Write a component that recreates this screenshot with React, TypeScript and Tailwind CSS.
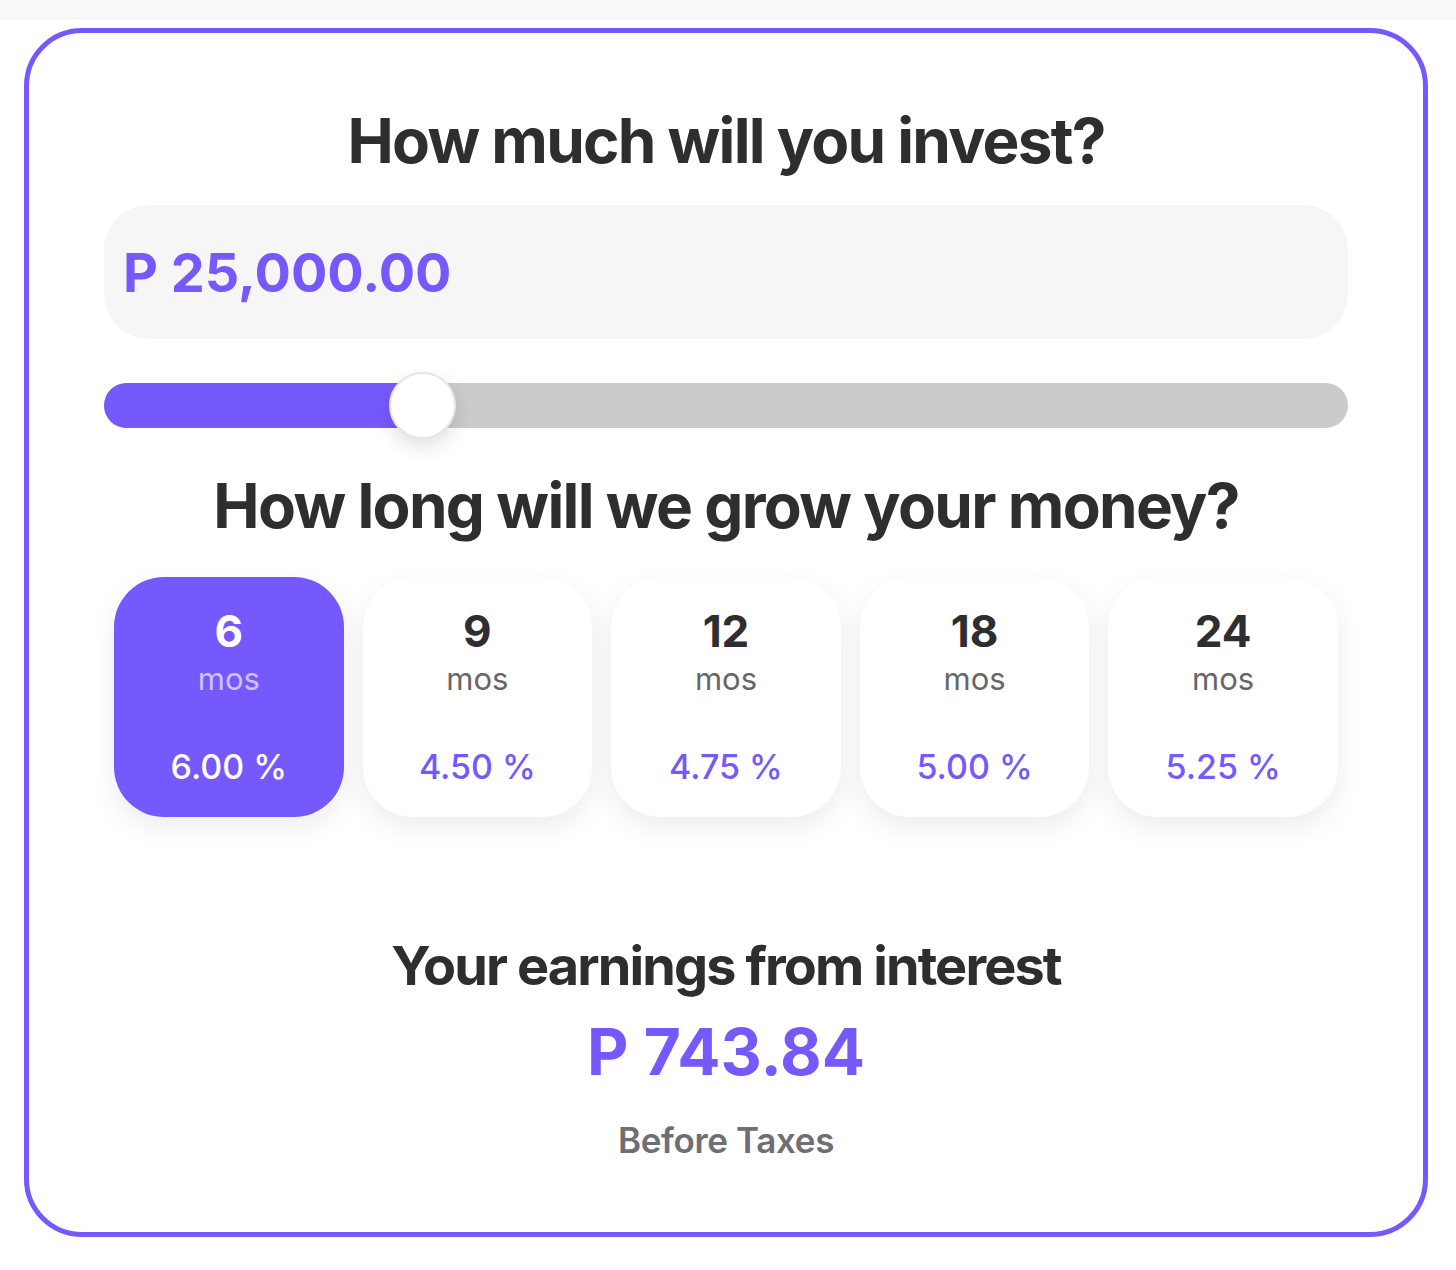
import React from "react";

const terms = [
  { n: "6", rate: "6.00 %", active: true },
  { n: "9", rate: "4.50 %", active: false },
  { n: "12", rate: "4.75 %", active: false },
  { n: "18", rate: "5.00 %", active: false },
  { n: "24", rate: "5.25 %", active: false },
];

export default function App() {
  return (
    <div className="w-[1456px] h-[1270px] bg-white font-['Inter',sans-serif] text-[#2e2e30]">
      <div className="h-[19px] bg-[#fafafa] border-b border-[#f2f2f2]" />
      <div className="pl-[24px] pr-[28px] pt-[9px]">
        <div className="h-[1209px] rounded-[58px] border-[5px] border-[#7659fd] px-[75px] flex flex-col items-stretch">
          <h1 className="mt-[72px] text-center text-[62px] leading-[72px] font-bold tracking-[-0.028em]">
            How much will you invest?
          </h1>
          <div className="mt-[28px] h-[134px] rounded-[45px] bg-[#f6f6f6] flex items-center pl-[19px]">
            <span className="text-[54px] font-bold text-[#7659fd]">P 25,000.00</span>
          </div>
          <div className="relative mt-[44px] h-[45px] rounded-full bg-[#cbcbcb]">
            <div className="h-full w-[320px] rounded-full bg-[#7659fd]" />
            <div className="absolute left-[285px] top-[-11px] w-[67px] h-[67px] rounded-full bg-white border-2 border-[#e6e6e6] shadow-[0_8px_20px_rgba(0,0,0,0.12)]" />
          </div>
          <h2 className="mt-[42px] text-center text-[62px] leading-[72px] font-bold tracking-[-0.027em]">
            How long will we grow your money?
          </h2>
          <div className="mt-[35px] flex gap-[19px] px-[10px]">
            {terms.map((t) => (
              <div
                key={t.n}
                className={
                  t.active
                    ? "w-[230px] h-[240px] rounded-[50px] bg-[#7659fd] flex flex-col items-center shadow-[0_10px_30px_rgba(0,0,0,0.08)]"
                    : "w-[230px] h-[240px] rounded-[50px] bg-white flex flex-col items-center shadow-[0_10px_30px_rgba(0,0,0,0.08)]"
                }
              >
                <div
                  className={
                    t.active
                      ? "mt-[26px] text-[44px] leading-[56px] font-bold text-white"
                      : "mt-[26px] text-[44px] leading-[56px] font-bold text-[#2e2e30]"
                  }
                >
                  {t.n}
                </div>
                <div
                  className={
                    t.active
                      ? "text-[31px] leading-[40px] text-[#cfc3ff]"
                      : "text-[31px] leading-[40px] text-[#666668]"
                  }
                >
                  mos
                </div>
                <div
                  className={
                    t.active
                      ? "mt-[46px] text-[34px] leading-[44px] font-medium text-white"
                      : "mt-[46px] text-[34px] leading-[44px] font-medium text-[#7659fd]"
                  }
                >
                  {t.rate}
                </div>
              </div>
            ))}
          </div>
          <h3 className="mt-[117px] text-center text-[54px] leading-[64px] font-bold tracking-[-0.035em]">
            Your earnings from interest
          </h3>
          <div className="mt-[18px] text-center text-[64px] leading-[72px] font-bold text-[#7659fd]">
            P 743.84
          </div>
          <div className="mt-[30px] text-center text-[35px] leading-[44px] font-semibold text-[#6e6e73] tracking-[-0.01em]">
            Before Taxes
          </div>
        </div>
      </div>
    </div>
  );
}
